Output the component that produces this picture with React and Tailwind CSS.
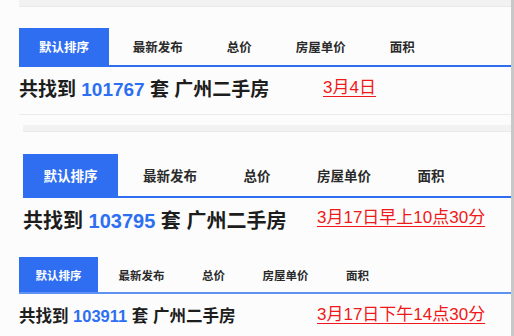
const tabs = ["最新发布", "总价", "房屋单价", "面积"];

function Block({ cfg, count, note }) {
  return (
    <div className={`flex-none flex flex-col ${cfg.wrap}`}>
      {cfg.strip && <div className="h-[7px] bg-[#f2f2f2] border-b border-[#e9e9e9]" />}
      <div className={`flex ${cfg.bar}`}>
        <div className={`flex items-center justify-center bg-[#2f6ef1] text-white font-bold ${cfg.active}`}>
          默认排序
        </div>
        {tabs.map((t, i) => (
          <div
            key={t}
            className={`flex items-center justify-center text-[#2a2a2a] font-bold ${cfg.tab} ${i === 0 ? cfg.first : ""}`}
          >
            {t}
          </div>
        ))}
      </div>
      <div className={`flex items-center ${cfg.row}`}>
        <div className={`flex-none font-bold text-[#1d1d1d] ${cfg.head}`}>
          共找到 <span className="text-[#2d6ff2]">{count}</span> 套 广州二手房
        </div>
        <span className={`text-[17px] text-[#f01818] underline underline-offset-[3px] decoration-1 ${cfg.note}`}>
          {note}
        </span>
      </div>
    </div>
  );
}

const first = {
  wrap: "h-[125px] pl-[19px]",
  strip: true,
  bar: "mt-[21px] h-[39px] border-b-2 border-[#2f6ef1]",
  active: "w-[90px] text-[12.5px] pt-[3px]",
  tab: "w-[81.5px] text-[12.5px] pt-[3px]",
  first: "ml-[8px]",
  row: "h-[48px] border-b border-[#ebebeb]",
  head: "w-[304px] text-[19px]",
  note: "pb-[5px]",
};

const second = {
  wrap: "h-[132px] pl-[23px]",
  strip: true,
  bar: "mt-[22px] h-[44px] border-b-2 border-[#2f6ef1]",
  active: "w-[95px] text-[13.5px] pt-[5px]",
  tab: "w-[87px] text-[13.5px] pt-[5px]",
  first: "ml-[8.5px]",
  row: "h-[46px]",
  head: "w-[294px] text-[20px]",
  note: "pb-[6px]",
};

const third = {
  wrap: "h-[90px] pl-[19px]",
  strip: false,
  bar: "h-[37px] border-b-2 border-[#5e93f3]",
  active: "w-[79px] text-[11.5px] pt-[4px]",
  tab: "w-[72px] text-[11.5px] pt-[4px]",
  first: "ml-[7.5px]",
  row: "h-[44px]",
  head: "w-[298px] text-[16.5px]",
  note: "pb-[3px]",
};

export default function App() {
  return (
    <div className="w-[514px] h-[336px] overflow-hidden bg-[#fcfcfc] border-r-[3px] border-[#c8c8c8] flex flex-col font-['Liberation_Sans','Noto_Sans_CJK_SC',sans-serif]">
      <Block cfg={first} count="101767" note="3月4日" />
      <Block cfg={second} count="103795" note="3月17日早上10点30分" />
      <Block cfg={third} count="103911" note="3月17日下午14点30分" />
    </div>
  );
}
